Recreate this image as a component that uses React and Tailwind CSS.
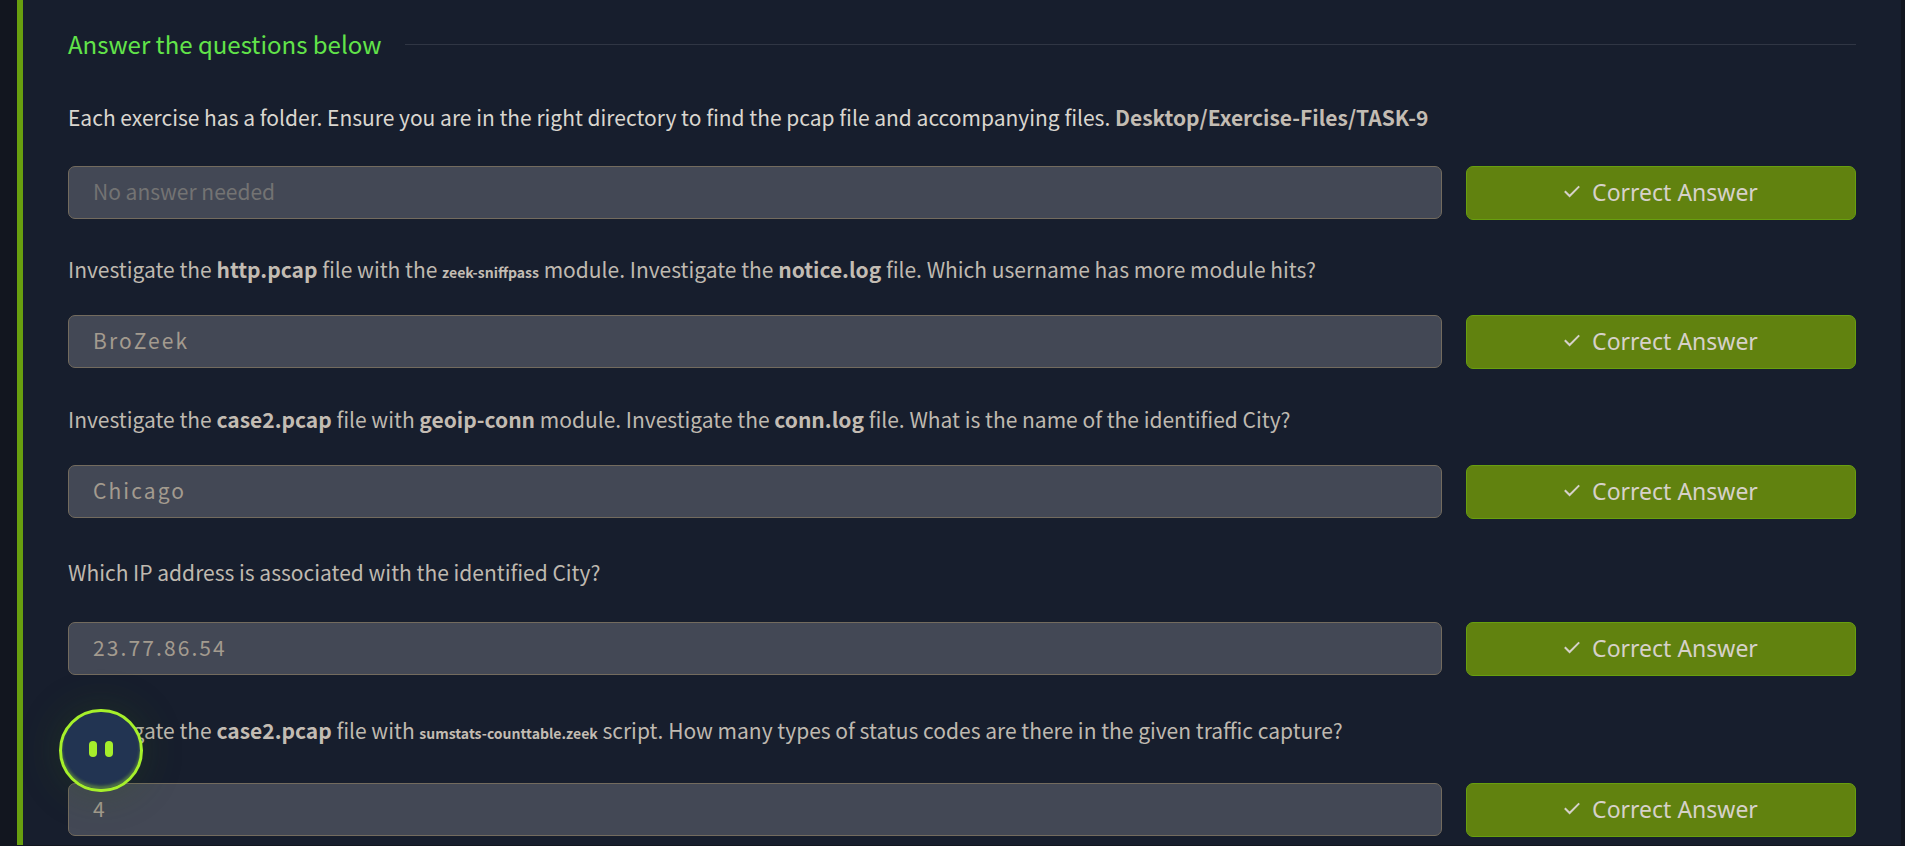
import React from "react";

const questions = [
  {
    id: "q1",
    spacing: "pt-[35px] pb-[31px]",
    text: (
      <span className="text-[#dad6cf]">
        Each exercise has a folder. Ensure you are in the right directory to find the pcap file and accompanying files.{" "}
        <Strong>Desktop/Exercise-Files/TASK-9</Strong>
      </span>
    ),
    answer: "",
  },
  {
    id: "q2",
    spacing: "pt-[31px] pb-7",
    text: (
      <>
        Investigate the <Strong>http.pcap</Strong> file with the <Small>zeek-sniffpass</Small> module. Investigate the{" "}
        <Strong>notice.log</Strong> file. Which username has more module hits?
      </>
    ),
    answer: "BroZeek",
  },
  {
    id: "q3",
    spacing: "pt-8 pb-7",
    text: (
      <>
        Investigate the <Strong>case2.pcap</Strong> file with <Strong>geoip-conn</Strong> module. Investigate the{" "}
        <Strong>conn.log</Strong> file. What is the name of the identified City?
      </>
    ),
    answer: "Chicago",
  },
  {
    id: "q4",
    spacing: "pt-[35px] pb-8",
    text: <>Which IP address is associated with the identified City?</>,
    answer: "23.77.86.54",
  },
  {
    id: "q5",
    spacing: "pt-9 pb-[35px]",
    text: (
      <>
        Investigate the <Strong>case2.pcap</Strong> file with <Small>sumstats-counttable.zeek</Small> script. How many
        types of status codes are there in the given traffic capture?
      </>
    ),
    answer: "4",
  },
];

function Strong({ children }) {
  return <strong className="font-bold text-[#c3bcb3]">{children}</strong>;
}

function Small({ children }) {
  return (
    <code className="font-['Noto_Sans_CJK_SC',sans-serif] text-[14px] leading-none font-bold text-[#c3bcb3]">
      {children}
    </code>
  );
}

function Question({ id, text, answer, spacing }) {
  return (
    <div>
      <label htmlFor={id} className={`block text-[21px] leading-9 text-[#bfb9b0] ${spacing}`}>
        {text}
      </label>
      <div className="flex items-start gap-6">
        <input
          id={id}
          type="text"
          readOnly
          value={answer}
          placeholder="No answer needed"
          className="h-[53px] min-w-0 flex-1 rounded-[7px] border border-[#736b5e] bg-[#434855] px-6 pb-1 text-[21px] tracking-widest text-[#a39b8f] outline-none placeholder:tracking-normal placeholder:text-[#737373]"
        />
        <button
          type="button"
          className="flex h-[54px] w-[390px] shrink-0 items-center justify-center gap-3 rounded-[7px] border border-[#689f0f] bg-[#61820f] pb-0.5 font-['Noto_Sans',sans-serif] text-[23px] text-[#d6d1c9]"
        >
          <svg className="h-4 w-4" viewBox="0 0 16 16" fill="none" stroke="currentColor" strokeWidth="2" aria-hidden="true">
            <path d="M0.8 7.2 5.6 12 15.2 2.4" />
          </svg>
          Correct Answer
        </button>
      </div>
    </div>
  );
}

export default function App() {
  return (
    <div className="min-h-screen bg-[#12161f] pr-1 pl-[17px] font-['Noto_Sans_CJK_SC',sans-serif]">
      <main className="border-l-[6px] border-[#689f0f] bg-[#171e2d] px-[45px] pt-6 pb-2">
        <div className="flex items-center gap-6">
          <h1 className="text-2xl leading-10 text-[#62e44a]">Answer the questions below</h1>
          <hr className="flex-1 border-[#303644]" />
        </div>
        {questions.map((q) => (
          <Question key={q.id} {...q} />
        ))}
      </main>
      <button
        type="button"
        aria-label="Open assistant"
        className="fixed bottom-[54px] left-[59px] flex h-[83px] w-[84px] items-center justify-center gap-2 rounded-full border-[3px] border-[#a6f02b] bg-[#223452] pb-1 shadow-[0_0_40px_rgba(50,90,20,0.3),inset_0_-3px_3px_rgba(166,238,43,0.35)]"
      >
        <span className="h-4 w-2 rounded-full bg-[#a6ee2b]" />
        <span className="h-4 w-2 rounded-full bg-[#a6ee2b]" />
      </button>
    </div>
  );
}
